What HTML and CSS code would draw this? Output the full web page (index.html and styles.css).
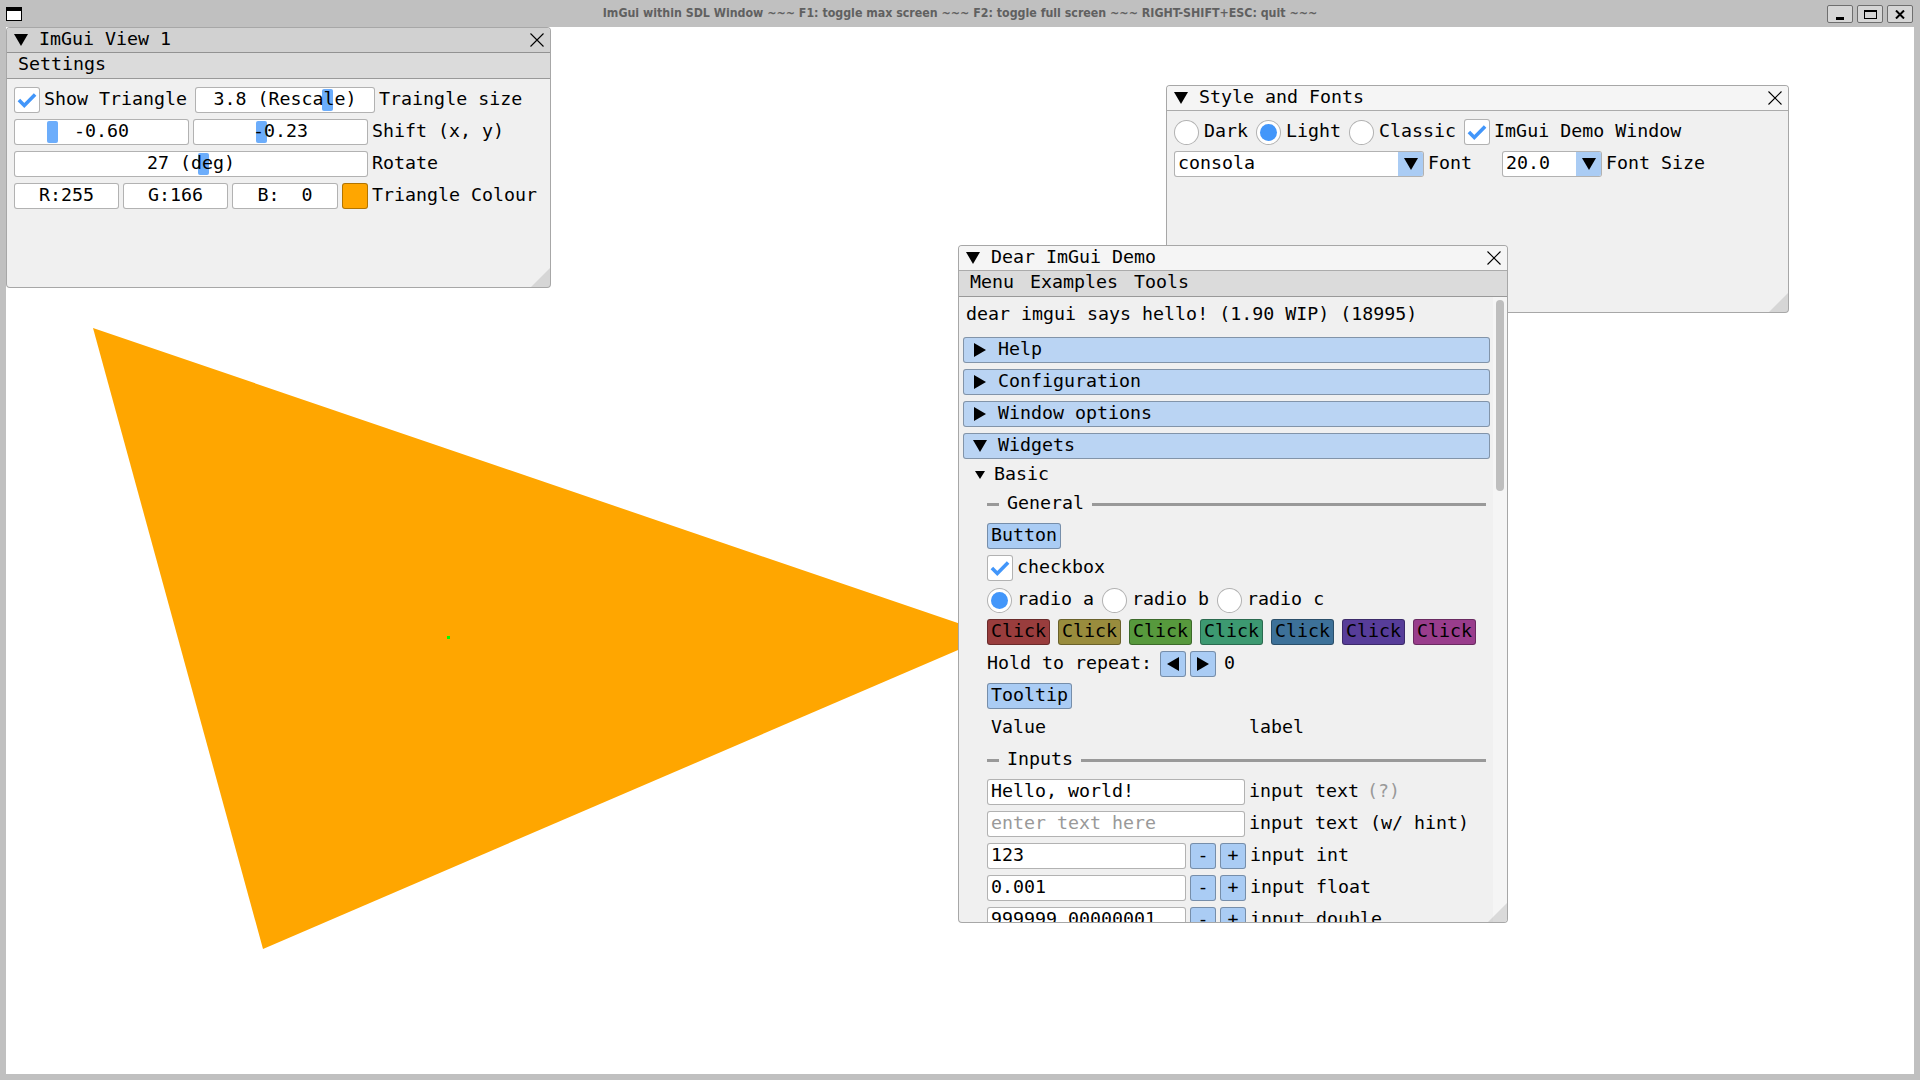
FILE: index.html
```html
<!DOCTYPE html>
<html lang="en">
<head>
<meta charset="utf-8">
<title>ImGui within SDL Window</title>
<link rel="stylesheet" href="styles.css">
</head>
<body>
<div class="screen">
  <header class="os-bar">
    <div class="os-icon"></div>
    <div class="os-title">ImGui within SDL Window ~~~ F1: toggle max screen ~~~ F2: toggle full screen ~~~ RIGHT-SHIFT+ESC: quit ~~~</div>
    <div class="os-buttons">
      <div class="os-btn"><span class="g-min"></span></div>
      <div class="os-btn"><span class="g-max"></span></div>
      <div class="os-btn"><svg class="g-close" width="10" height="9" viewBox="0 0 10 9"><path d="M1 0.5 L9 8.5 M9 0.5 L1 8.5"/></svg></div>
    </div>
  </header>
  <div class="os-frame">
    <main class="canvas">
      <svg class="scene" width="1908" height="1047" viewBox="0 0 1908 1047">
        <polygon points="87,301 987,608 257,922" fill="#ffa600"/>
        <rect x="441" y="609" width="3" height="3" fill="#00ff00"/>
      </svg>

      <!-- ImGui View 1 -->
      <section class="win win-view1">
        <div class="tb">
          <span class="tb-arrow"><svg width="14" height="12" viewBox="0 0 14 12"><polygon points="0,0 14,0 7,12"/></svg></span>
          <span class="tb-title">ImGui View 1</span>
          <svg class="tb-close" width="14" height="14" viewBox="0 0 14 14"><path d="M0.5 0.5 L13.5 13.5 M13.5 0.5 L0.5 13.5"/></svg>
        </div>
        <nav class="menubar"><span>Settings</span></nav>
        <div class="wbody">
          <div class="row">
            <span class="check"><svg width="24" height="24" viewBox="1 1 24 24"><polyline points="4.9,13 10.3,18.4 21.1,7.6"/></svg></span>
            <span class="lab">Show Triangle</span>
            <span class="frame center w180 sp8"><i class="grab" style="left:126px"></i><span class="ftext">3.8 (Rescale)</span></span>
            <span class="lab">Traingle size</span>
          </div>
          <div class="row">
            <span class="frame center w175"><i class="grab" style="left:32px"></i><span class="ftext">-0.60</span></span>
            <span class="frame center w175 sp4"><i class="grab" style="left:62px"></i><span class="ftext">-0.23</span></span>
            <span class="lab">Shift (x, y)</span>
          </div>
          <div class="row">
            <span class="frame center w354"><i class="grab" style="left:183px"></i><span class="ftext">27 (deg)</span></span>
            <span class="lab">Rotate</span>
          </div>
          <div class="row">
            <span class="frame center w105"><span class="ftext">R:255</span></span>
            <span class="frame center w105 sp4"><span class="ftext">G:166</span></span>
            <span class="frame center w106 sp4"><span class="ftext">B:  0</span></span>
            <span class="swatch sp4"></span>
            <span class="lab">Triangle Colour</span>
          </div>
        </div>
        <div class="grip"></div>
      </section>

      <!-- Style and Fonts -->
      <section class="win win-style">
        <div class="tb">
          <span class="tb-arrow"><svg width="14" height="12" viewBox="0 0 14 12"><polygon points="0,0 14,0 7,12"/></svg></span>
          <span class="tb-title">Style and Fonts</span>
          <svg class="tb-close" width="14" height="14" viewBox="0 0 14 14"><path d="M0.5 0.5 L13.5 13.5 M13.5 0.5 L0.5 13.5"/></svg>
        </div>
        <div class="wbody">
          <div class="row">
            <span class="radio"></span><span class="lab">Dark</span>
            <span class="radio on sp8"></span><span class="lab">Light</span>
            <span class="radio sp8"></span><span class="lab">Classic</span>
            <span class="check sp8"><svg width="24" height="24" viewBox="1 1 24 24"><polyline points="4.9,13 10.3,18.4 21.1,7.6"/></svg></span><span class="lab">ImGui Demo Window</span>
          </div>
          <div class="row">
            <span class="combo w250"><span class="combo-val">consola</span><span class="combo-btn"><svg width="14" height="12" viewBox="0 0 14 12"><polygon points="0,0 14,0 7,12"/></svg></span></span>
            <span class="lab">Font</span>
            <span class="combo w100 sp30"><span class="combo-val">20.0</span><span class="combo-btn"><svg width="14" height="12" viewBox="0 0 14 12"><polygon points="0,0 14,0 7,12"/></svg></span></span>
            <span class="lab">Font Size</span>
          </div>
        </div>
        <div class="grip"></div>
      </section>

      <!-- Dear ImGui Demo -->
      <section class="win win-demo">
        <div class="tb">
          <span class="tb-arrow"><svg width="14" height="12" viewBox="0 0 14 12"><polygon points="0,0 14,0 7,12"/></svg></span>
          <span class="tb-title">Dear ImGui Demo</span>
          <svg class="tb-close" width="14" height="14" viewBox="0 0 14 14"><path d="M0.5 0.5 L13.5 13.5 M13.5 0.5 L0.5 13.5"/></svg>
        </div>
        <nav class="menubar"><span>Menu</span><span>Examples</span><span>Tools</span></nav>
        <div class="demo-body">
          <div class="demo-content">
            <div class="tline">dear imgui says hello! (1.90 WIP) (18995)</div>
            <div class="hdr hdr-first"><span class="ar"><svg width="12" height="14" viewBox="0 0 12 14"><polygon points="0,0 12,7 0,14"/></svg></span><span class="ht">Help</span></div>
            <div class="hdr"><span class="ar"><svg width="12" height="14" viewBox="0 0 12 14"><polygon points="0,0 12,7 0,14"/></svg></span><span class="ht">Configuration</span></div>
            <div class="hdr"><span class="ar"><svg width="12" height="14" viewBox="0 0 12 14"><polygon points="0,0 12,7 0,14"/></svg></span><span class="ht">Window options</span></div>
            <div class="hdr"><span class="ar"><svg width="14" height="12" viewBox="0 0 14 12"><polygon points="0,0 14,0 7,12"/></svg></span><span class="ht">Widgets</span></div>
            <div class="tree"><span class="ar"><svg width="10" height="8" viewBox="0 0 10 8"><polygon points="0,0 10,0 5,8"/></svg></span><span class="tt">Basic</span></div>
            <div class="indent">
              <div class="sep"><span class="sep-dash"></span><span class="sep-label">General</span><span class="sep-line"></span></div>
              <div class="row"><span class="btn">Button</span></div>
              <div class="row"><span class="check"><svg width="24" height="24" viewBox="1 1 24 24"><polyline points="4.9,13 10.3,18.4 21.1,7.6"/></svg></span><span class="lab">checkbox</span></div>
              <div class="row">
                <span class="radio on"></span><span class="lab">radio a</span>
                <span class="radio sp8"></span><span class="lab">radio b</span>
                <span class="radio sp8"></span><span class="lab">radio c</span>
              </div>
              <div class="row">
                <span class="btn click c0">Click</span>
                <span class="btn click c1 sp8">Click</span>
                <span class="btn click c2 sp8">Click</span>
                <span class="btn click c3 sp8">Click</span>
                <span class="btn click c4 sp8">Click</span>
                <span class="btn click c5 sp8">Click</span>
                <span class="btn click c6 sp8">Click</span>
              </div>
              <div class="row">
                <span class="txt">Hold to repeat:</span>
                <span class="btn sq arrowbtn sp8"><svg width="12" height="14" viewBox="0 0 12 14"><polygon points="12,0 0,7 12,14"/></svg></span>
                <span class="btn sq arrowbtn sp4"><svg width="12" height="14" viewBox="0 0 12 14"><polygon points="0,0 12,7 0,14"/></svg></span>
                <span class="txt sp8">0</span>
              </div>
              <div class="row"><span class="btn">Tooltip</span></div>
              <div class="row"><span class="ltext">Value</span><span class="lab">label</span></div>
              <div class="sep"><span class="sep-dash"></span><span class="sep-label">Inputs</span><span class="sep-line"></span></div>
              <div class="row"><span class="frame left w258"><span class="ftext">Hello, world!</span></span><span class="lab">input text</span><span class="txt dim sp8">(?)</span></div>
              <div class="row"><span class="frame left w258"><span class="ftext dim">enter text here</span></span><span class="lab">input text (w/ hint)</span></div>
              <div class="row"><span class="frame left w199"><span class="ftext">123</span></span><span class="btn sq sp4">-</span><span class="btn sq sp4">+</span><span class="lab">input int</span></div>
              <div class="row"><span class="frame left w199"><span class="ftext">0.001</span></span><span class="btn sq sp4">-</span><span class="btn sq sp4">+</span><span class="lab">input float</span></div>
              <div class="row"><span class="frame left w199"><span class="ftext">999999.00000001</span></span><span class="btn sq sp4">-</span><span class="btn sq sp4">+</span><span class="lab">input double</span></div>
            </div>
          </div>
          <div class="scrollbar"><div class="thumb"></div></div>
        </div>
        <div class="grip"></div>
      </section>
    </main>
  </div>
</div>
</body>
</html>
```

FILE: styles.css
```css
html, body {
  margin: 0;
  padding: 0;
}
body {
  width: 1920px;
  height: 1080px;
  overflow: hidden;
  background: #c0c0c0;
  font-family: "DejaVu Sans Mono", "Liberation Mono", monospace;
  font-size: 18.3px;
  line-height: 20px;
  color: #000;
}
.screen {
  width: 1920px;
  height: 1080px;
  display: flex;
  flex-direction: column;
}

/* ---------- OS window chrome ---------- */
.os-bar {
  flex: none;
  height: 27px;
  display: grid;
  grid-template-columns: 1fr auto 1fr;
  align-items: start;
  background: #c0c0c0;
}
.os-icon {
  margin: 7px 0 0 6px;
  width: 16px;
  height: 14px;
  box-sizing: border-box;
  border: 1px solid #000;
  border-top-width: 4px;
  background: #fff;
}
.os-title {
  font-family: "DejaVu Sans Condensed", "DejaVu Sans", sans-serif;
  font-stretch: condensed;
  font-weight: bold;
  font-size: 12.3px;
  line-height: 27px;
  color: #606060;
  white-space: pre;
}
.os-buttons {
  justify-self: end;
  display: flex;
  gap: 4px;
  margin: 5px 7px 0 0;
}
.os-btn {
  width: 26px;
  height: 18px;
  box-sizing: border-box;
  border: 1px solid #6f6f6f;
  border-radius: 2px;
  background: #d6d6d6;
  display: flex;
  align-items: center;
  justify-content: center;
}
.g-min {
  width: 8px;
  height: 3px;
  background: #000;
  margin-top: 8px;
}
.g-max {
  width: 13px;
  height: 9px;
  box-sizing: border-box;
  border: 1px solid #000;
  border-top-width: 2px;
}
.g-close path {
  stroke: #000;
  stroke-width: 2;
  fill: none;
}
.os-frame {
  flex: 1;
  display: flex;
  padding: 0 6px 6px 6px;
  min-height: 0;
}
.canvas {
  flex: 1;
  position: relative;
  background: #fff;
  overflow: hidden;
}
.scene {
  display: block;
}

/* ---------- ImGui windows ---------- */
.win {
  position: absolute;
  box-sizing: border-box;
  border: 1px solid rgba(0, 0, 0, 0.3);
  border-radius: 4px;
  background: #f0f0f0;
  overflow: hidden;
  display: flex;
  flex-direction: column;
}
.win-view1 { left: 0; top: 0; width: 545px; height: 261px; }
.win-style { left: 1160px; top: 58px; width: 623px; height: 228px; }
.win-demo  { left: 952px; top: 218px; width: 550px; height: 678px; }

.tb {
  flex: none;
  height: 25px;
  box-sizing: border-box;
  border-bottom: 1px solid rgba(0, 0, 0, 0.3);
  background: #f5f5f5;
  display: flex;
  align-items: center;
  padding: 0 6px 0 7px;
}
.win-view1 .tb { background: #d1d1d1; }
.tb-arrow {
  width: 14px;
  display: flex;
  justify-content: center;
}
.tb-arrow svg, .ar svg, .combo-btn svg, .sq svg { display: block; }
.tb-title {
  margin-left: 11px;
  flex: 1;
  white-space: pre;
}
.tb-close path {
  stroke: #000;
  stroke-width: 1.1;
  fill: none;
}
.menubar {
  flex: none;
  height: 26px;
  box-sizing: border-box;
  border-bottom: 1px solid rgba(0, 0, 0, 0.3);
  background: #dbdbdb;
  display: flex;
  align-items: center;
  gap: 16px;
  padding-left: 11px;
}
.wbody {
  padding: 8px 7px;
  display: flex;
  flex-direction: column;
  gap: 6px;
}
.row {
  flex: none;
  height: 26px;
  display: flex;
  align-items: center;
  white-space: pre;
}
.lab { margin-left: 4px; white-space: pre; }
.sp4 { margin-left: 4px; }
.sp8 { margin-left: 8px; }
.sp30 { margin-left: 30px; }
.dim { color: #999; }

/* lift text by ~1.5px: DejaVu sits lower than Consolas on the same line box */
.lab, .txt, .tb-title, .ht, .tt, .sep-label, .menubar > span, .ltext {
  padding-bottom: 3px;
}

/* frames */
.frame {
  flex: none;
  height: 26px;
  box-sizing: border-box;
  background: #fff;
  border: 1px solid rgba(0, 0, 0, 0.3);
  border-radius: 3px;
  display: flex;
  align-items: center;
  position: relative;
  white-space: pre;
  padding-bottom: 3px;
}
.frame.center { justify-content: center; }
.frame.left { padding-left: 3px; }
.ftext { position: relative; z-index: 1; }
.w100 { width: 100px; }
.w105 { width: 105px; }
.w106 { width: 106px; }
.w175 { width: 175px; }
.w180 { width: 180px; }
.w199 { width: 199px; }
.w250 { width: 250px; }
.w258 { width: 258px; }
.w354 { width: 354px; }
.grab {
  position: absolute;
  top: 1px;
  bottom: 1px;
  width: 11px;
  border-radius: 2px;
  background: #6cadfb;
}
.swatch {
  flex: none;
  width: 26px;
  height: 26px;
  box-sizing: border-box;
  border: 1px solid rgba(0, 0, 0, 0.3);
  border-radius: 3px;
  background: #ffa600;
}

.check {
  flex: none;
  width: 26px;
  height: 26px;
  box-sizing: border-box;
  background: #fff;
  border: 1px solid rgba(0, 0, 0, 0.3);
  border-radius: 3px;
}
.check svg { display: block; }
.check polyline {
  fill: none;
  stroke: #4296fa;
  stroke-width: 3.6;
}
.radio {
  flex: none;
  width: 25px;
  height: 25px;
  margin-right: 1px;
  box-sizing: border-box;
  border-radius: 50%;
  background: #fff;
  border: 1px solid rgba(0, 0, 0, 0.3);
  display: flex;
  align-items: center;
  justify-content: center;
}
.radio.on::after {
  content: "";
  width: 17px;
  height: 17px;
  border-radius: 50%;
  background: #4296fa;
}

.combo {
  flex: none;
  height: 26px;
  box-sizing: border-box;
  background: #fff;
  border: 1px solid rgba(0, 0, 0, 0.3);
  border-radius: 3px;
  display: flex;
  overflow: hidden;
}
.combo-val {
  flex: 1;
  padding-left: 3px;
  padding-bottom: 3px;
  display: flex;
  align-items: center;
}
.combo-btn {
  width: 25px;
  background: #aaccf4;
  display: flex;
  align-items: center;
  justify-content: center;
}

/* buttons */
.btn {
  flex: none;
  height: 26px;
  box-sizing: border-box;
  padding: 0 3px 3px 3px;
  background: #aaccf4;
  border: 1px solid rgba(0, 0, 0, 0.3);
  border-radius: 3px;
  display: flex;
  align-items: center;
  justify-content: center;
}
.btn.sq { width: 26px; padding: 0 0 3px 0; }
.btn.arrowbtn { padding: 0; }
.btn.click { width: 63px; padding: 0 0 3px 0; }
.c0 { background: #993d3d; }
.c1 { background: #998c3d; }
.c2 { background: #57993d; }
.c3 { background: #3d9971; }
.c4 { background: #3d7199; }
.c5 { background: #573d99; }
.c6 { background: #993d8c; }

/* resize grip */
.grip {
  position: absolute;
  right: 0;
  bottom: 0;
  width: 19px;
  height: 19px;
  background: rgba(89, 89, 89, 0.17);
  clip-path: polygon(100% 0, 100% 100%, 0 100%);
}

/* demo window */
.demo-body {
  flex: 1;
  min-height: 0;
  display: flex;
}
.demo-content {
  flex: 1;
  min-width: 0;
  padding: 8px 7px 0 7px;
  display: flex;
  flex-direction: column;
  gap: 6px;
  overflow: hidden;
}
.demo-content > *, .indent > * { flex-shrink: 0; }
.tline {
  height: 20px;
  line-height: 17.4px;
  white-space: pre;
}
.hdr {
  height: 26px;
  box-sizing: border-box;
  margin: 0 -4px 0 -3px;
  background: #bad4f3;
  border: 1px solid rgba(0, 0, 0, 0.3);
  border-radius: 3px;
  display: flex;
  align-items: center;
  padding-left: 9px;
}
.hdr-first { margin-top: 6px; }
.ar {
  width: 14px;
  display: flex;
  justify-content: center;
}
.ht { margin-left: 11px; white-space: pre; }
.tree {
  height: 20px;
  display: flex;
  align-items: center;
  padding-left: 7px;
}
.tt { margin-left: 7px; }
.indent {
  margin-left: 21px;
  display: flex;
  flex-direction: column;
  gap: 6px;
}
.sep {
  height: 26px;
  display: flex;
  align-items: center;
}
.sep-dash {
  width: 12px;
  height: 3px;
  background: #999;
}
.sep-label { margin-left: 8px; }
.sep-line {
  flex: 1;
  height: 3px;
  margin-left: 8px;
  background: #999;
}
.ltext {
  width: 258px;
  box-sizing: border-box;
  padding-left: 4px;
}
.scrollbar {
  flex: none;
  width: 14px;
  box-sizing: border-box;
  padding: 3px;
  background: #f5f5f5;
}
.thumb {
  height: 191px;
  border-radius: 4px;
  background: #bebebe;
}
```
